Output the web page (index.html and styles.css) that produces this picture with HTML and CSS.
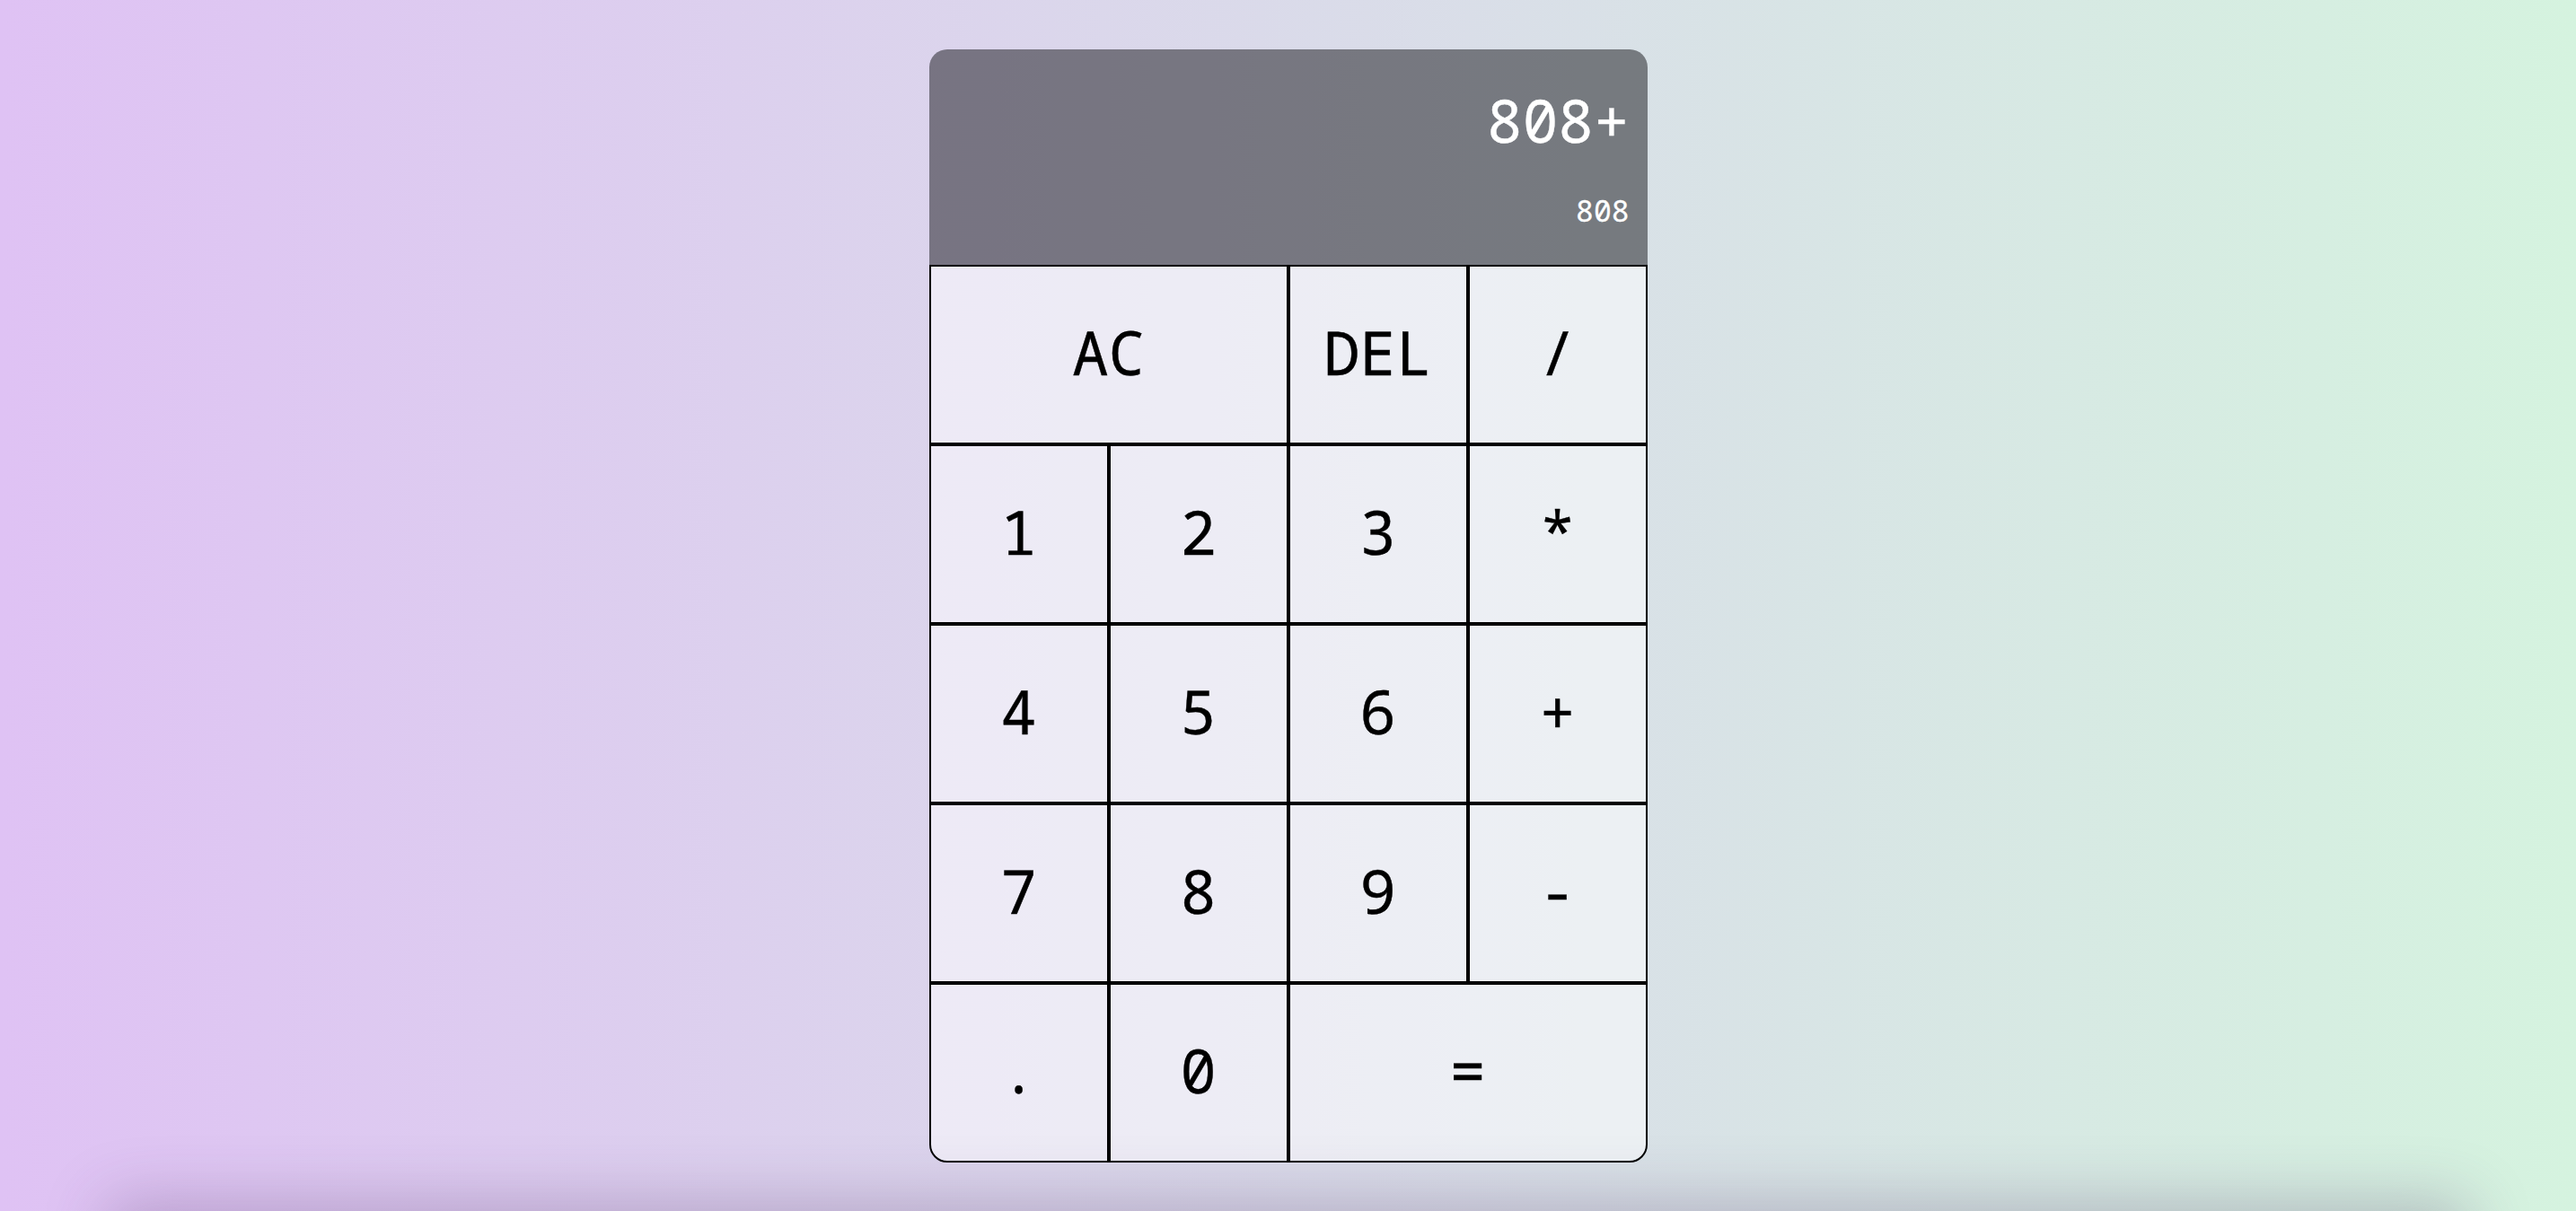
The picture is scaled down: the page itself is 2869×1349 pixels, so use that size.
FILE: index.html
```html
<!DOCTYPE html>
<html lang="en">
<head>
<meta charset="utf-8">
<title>Calculator</title>
<link rel="stylesheet" href="styles.css">
</head>
<body>
  <div class="calculator-grid">
    <div class="output">
      <div class="current-operand">808+</div>
      <div class="previous-operand">808</div>
    </div>
    <button class="key span-two">AC</button>
    <button class="key">DEL</button>
    <button class="key">/</button>
    <button class="key">1</button>
    <button class="key">2</button>
    <button class="key">3</button>
    <button class="key">*</button>
    <button class="key">4</button>
    <button class="key">5</button>
    <button class="key">6</button>
    <button class="key">+</button>
    <button class="key">7</button>
    <button class="key">8</button>
    <button class="key">9</button>
    <button class="key">-</button>
    <button class="key key-bl">.</button>
    <button class="key">0</button>
    <button class="key span-two key-br">=</button>
  </div>
  <div class="floor-shadow"></div>
</body>
</html>
```
FILE: styles.css
```css
*, *::before, *::after {
  box-sizing: border-box;
}

body {
  margin: 0;
  padding: 0;
  overflow: hidden;
  background: linear-gradient(to right, #dfc2f4, #d5f3df);
  font-family: "Noto Sans Mono", "DejaVu Sans Mono", monospace;
}

.calculator-grid {
  display: grid;
  justify-content: center;
  align-content: center;
  min-height: 100vh;
  grid-template-columns: repeat(4, 200px);
  grid-template-rows: minmax(240px, auto) repeat(5, 200px);
}

.key {
  font-family: "Noto Sans Mono", "DejaVu Sans Mono", monospace;
  font-size: 67px;
  color: #000;
  border: 2px solid #000;
  background: rgba(255, 255, 255, 0.5);
  padding: 0 0 6px;
  margin: 0;
  outline: none;
  cursor: pointer;
  -webkit-text-stroke: 0.4px #000;
}

.span-two {
  grid-column: span 2;
}

.key-bl {
  border-bottom-left-radius: 20px;
}

.key-br {
  border-bottom-right-radius: 20px;
}

.output {
  grid-column: 1 / -1;
  background: rgba(20, 20, 24, 0.5);
  border-radius: 20px 20px 0 0;
  display: flex;
  flex-direction: column;
  align-items: flex-end;
  justify-content: space-around;
  padding: 16px 20px 20px;
  word-break: break-all;
}

.current-operand {
  color: #fff;
  font-size: 66px;
  -webkit-text-stroke: 0.4px #fff;
}

.previous-operand {
  color: #fff;
  font-size: 33px;
  -webkit-text-stroke: 0.3px #fff;
}

.floor-shadow {
  position: fixed;
  left: 130px;
  right: 130px;
  top: 100%;
  height: 120px;
  box-shadow: 0 0 70px 10px rgba(80, 50, 100, 0.28);
  pointer-events: none;
}
```
